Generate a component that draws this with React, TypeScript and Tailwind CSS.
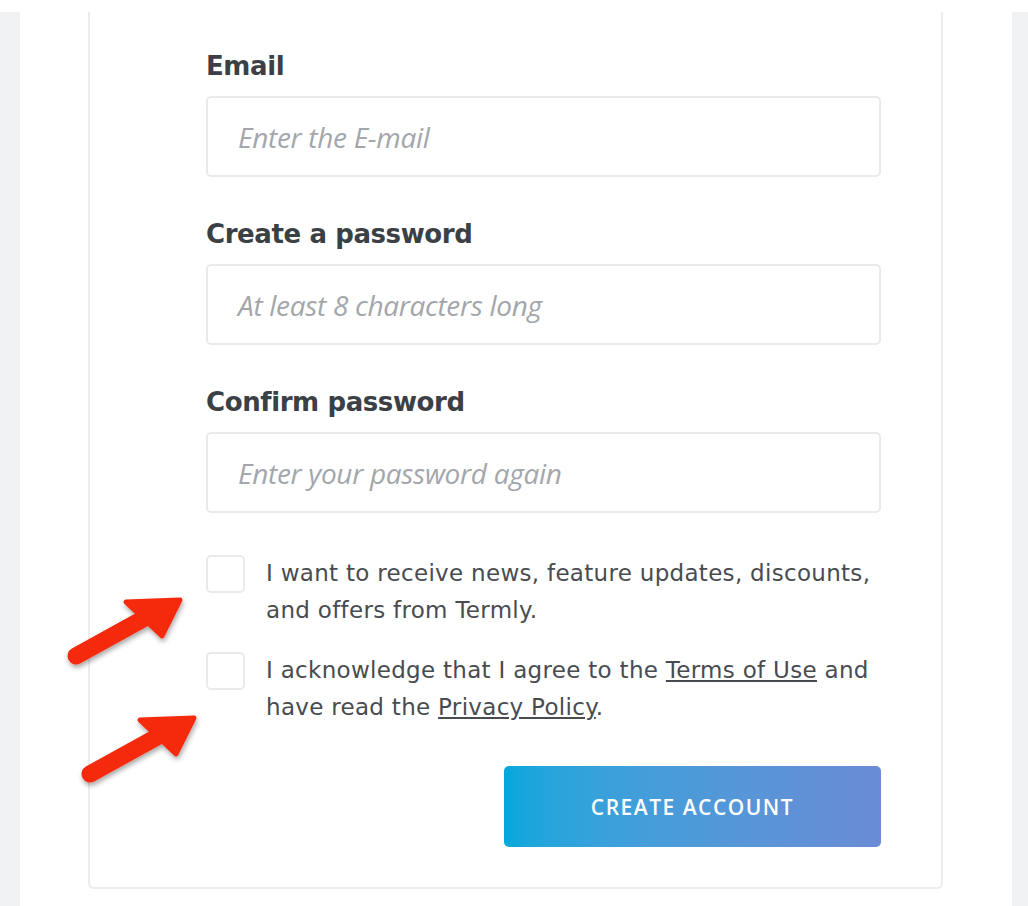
import React from "react";

const Field = ({ label, placeholder }: { label: string; placeholder: string }) => (
  <div className="flex flex-col">
    <label className="mb-[14px] text-[26px] leading-[32px] font-semibold text-[#3b4045] [font-family:'DejaVu_Sans',sans-serif] tracking-[-0.4px]">
      {label}
    </label>
    <div className="flex h-[81px] items-center rounded-[5px] border-2 border-[#e9eaec] px-[30px]">
      <span className="text-[28px] italic text-[#a3a6aa] [font-family:'Open_Sans',sans-serif] tracking-[-0.3px]">
        {placeholder}
      </span>
    </div>
  </div>
);

const Box = () => (
  <div className="h-[38px] w-[39px] shrink-0 rounded-[5px] border-2 border-[#e9eaec] bg-white" />
);

const Arrow = ({ className }: { className: string }) => (
  <svg className={className} width="140" height="110" viewBox="0 0 140 110">
    <defs>
      <filter id="sh" x="-20%" y="-20%" width="150%" height="150%">
        <feDropShadow dx="1" dy="3" stdDeviation="2.5" floodColor="#000" floodOpacity="0.35" />
      </filter>
    </defs>
    <g filter="url(#sh)">
      <path d="M14 80 L90 38" stroke="#f52a0c" strokeWidth="17" strokeLinecap="round" fill="none" />
      <path
        d="M64 26 L118 24 L100 60 Z"
        fill="#f52a0c"
        stroke="#f52a0c"
        strokeWidth="5"
        strokeLinejoin="round"
      />
    </g>
  </svg>
);

export default function App() {
  return (
    <div className="relative flex h-[906px] w-[1028px] bg-white pt-[12px]">
      <div className="w-[20px] bg-[#f1f2f4]" />
      <div className="flex-1 pl-[68px]">
        <div className="h-[877px] w-[855px] rounded-b-[6px] border-2 border-t-0 border-[#ebecee] pl-[116px] pr-[60px] pt-[38px]">
          <div className="flex flex-col gap-[41px]">
            <Field label="Email" placeholder="Enter the E-mail" />
            <Field label="Create a password" placeholder="At least 8 characters long" />
            <Field label="Confirm password" placeholder="Enter your password again" />
          </div>
          <div className="mt-[42px] flex flex-col gap-[23px] text-[23px] leading-[37px] text-[#484c50] [font-family:'DejaVu_Sans',sans-serif] tracking-[0.3px]">
            <div className="flex gap-[21px]">
              <Box />
              <p>I want to receive news, feature updates, discounts, and offers from Termly.</p>
            </div>
            <div className="flex gap-[21px]">
              <Box />
              <p>
                I acknowledge that I agree to the <span className="underline underline-offset-2">Terms of Use</span> and
                have read the <span className="underline underline-offset-2">Privacy Policy</span>.
              </p>
            </div>
          </div>
          <div className="mt-[40px] flex justify-end">
            <button className="h-[81px] w-[377px] rounded-[5px] bg-gradient-to-r from-[#00a8dc] to-[#6a8bd6] pt-[3px] text-[21px] font-semibold tracking-[1.5px] text-white [font-family:'Open_Sans',sans-serif]">
              CREATE ACCOUNT
            </button>
          </div>
        </div>
      </div>
      <div className="w-[16px] bg-[#f1f2f4]" />
      <Arrow className="absolute left-[62px] top-[576px]" />
      <Arrow className="absolute left-[76px] top-[694px]" />
    </div>
  );
}
